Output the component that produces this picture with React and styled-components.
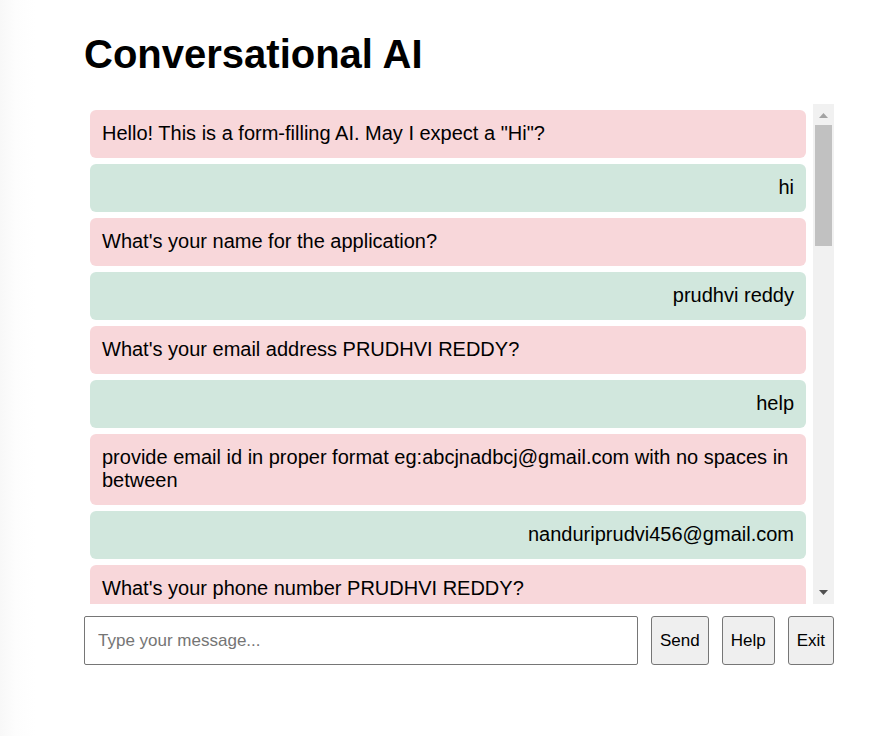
import React, { useState } from "react";
import styled, { createGlobalStyle } from "styled-components";

const GlobalStyle = createGlobalStyle`
  * { box-sizing: border-box; }
  body {
    margin: 0;
    background: #fff;
    color: #000;
    font-family: "Liberation Sans", Arial, sans-serif;
    font-size: 20px;
    line-height: 23px;
  }
`;

const Page = styled.main`
  min-height: 100vh;
  padding: 30px 46px 71px 84px;
  background: linear-gradient(to right, #f8f8f8, #fdfdfd 16px, #fff 36px);
`;

const Title = styled.h1`
  margin: 0 0 26px;
  font-size: 40px;
  line-height: 48px;
`;

const ChatWindow = styled.section`
  display: flex;
  height: 500px;
`;

const MessageList = styled.ul`
  flex: 1;
  min-width: 0;
  display: flex;
  flex-direction: column;
  gap: 6px;
  margin: 0;
  padding: 6px 7px 6px 6px;
  list-style: none;
  overflow-y: auto;
  scrollbar-width: none;
`;

const Message = styled.li`
  flex: none;
  padding: 12px 12px 13px;
  border-radius: 6px;
  background: ${({ $sender }) => ($sender === "user" ? "#d1e7dd" : "#f8d7da")};
  text-align: ${({ $sender }) => ($sender === "user" ? "right" : "left")};
  overflow-wrap: anywhere;
`;

const Scrollbar = styled.div`
  flex: none;
  display: flex;
  flex-direction: column;
  align-items: center;
  width: 21px;
  background: #f1f1f1;
`;

const ScrollArrow = styled.svg`
  flex: none;
  width: 21px;
  height: 21px;
  fill: ${({ $active }) => ($active ? "#505050" : "#a3a3a3")};
`;

const ScrollTrack = styled.div`
  flex: 1;
  width: 17px;
`;

const ScrollThumb = styled.div`
  height: 121px;
  background: #c1c1c1;
`;

const Composer = styled.form`
  display: flex;
  gap: 13px;
  margin-top: 12px;
`;

const MessageInput = styled.input`
  flex: 1;
  min-width: 0;
  height: 49px;
  padding: 0 13px;
  border: 1px solid #767676;
  border-radius: 2px;
  background: #fff;
  color: #000;
  font: 17px "Liberation Sans", Arial, sans-serif;

  &::placeholder { color: #757575; }
`;

const ActionButton = styled.button`
  flex: none;
  height: 49px;
  padding: 0 8px;
  border: 1px solid #767676;
  border-radius: 3px;
  background: #efefef;
  color: #000;
  font: 17px "Liberation Sans", Arial, sans-serif;
`;

const initialMessages = [
  { sender: "bot", text: 'Hello! This is a form-filling AI. May I expect a "Hi"?' },
  { sender: "user", text: "hi" },
  { sender: "bot", text: "What's your name for the application?" },
  { sender: "user", text: "prudhvi reddy" },
  { sender: "bot", text: "What's your email address PRUDHVI REDDY?" },
  { sender: "user", text: "help" },
  {
    sender: "bot",
    text: "provide email id in proper format eg:abcjnadbcj@gmail.com with no spaces in between",
  },
  { sender: "user", text: "nanduriprudvi456@gmail.com" },
  { sender: "bot", text: "What's your phone number PRUDHVI REDDY?" },
];

export default function App() {
  const [messages, setMessages] = useState(initialMessages);
  const [draft, setDraft] = useState("");

  const say = (text) => setMessages((list) => [...list, { sender: "user", text }]);

  const handleSubmit = (event) => {
    event.preventDefault();
    if (!draft.trim()) return;
    say(draft.trim());
    setDraft("");
  };

  return (
    <Page>
      <GlobalStyle />
      <Title>Conversational AI</Title>
      <ChatWindow aria-label="Conversation">
        <MessageList>
          {messages.map((message, index) => (
            <Message key={index} $sender={message.sender}>
              {message.text}
            </Message>
          ))}
        </MessageList>
        <Scrollbar aria-hidden="true">
          <ScrollArrow viewBox="0 0 21 21">
            <path d="M6 14 L10.5 9 L15 14 Z" />
          </ScrollArrow>
          <ScrollTrack>
            <ScrollThumb />
          </ScrollTrack>
          <ScrollArrow viewBox="0 0 21 21" $active>
            <path d="M6 7 L10.5 12 L15 7 Z" />
          </ScrollArrow>
        </Scrollbar>
      </ChatWindow>
      <Composer onSubmit={handleSubmit}>
        <MessageInput
          type="text"
          aria-label="Message"
          placeholder="Type your message..."
          value={draft}
          onChange={(event) => setDraft(event.target.value)}
        />
        <ActionButton type="submit">Send</ActionButton>
        <ActionButton type="button" onClick={() => say("help")}>Help</ActionButton>
        <ActionButton type="button" onClick={() => say("exit")}>Exit</ActionButton>
      </Composer>
    </Page>
  );
}
